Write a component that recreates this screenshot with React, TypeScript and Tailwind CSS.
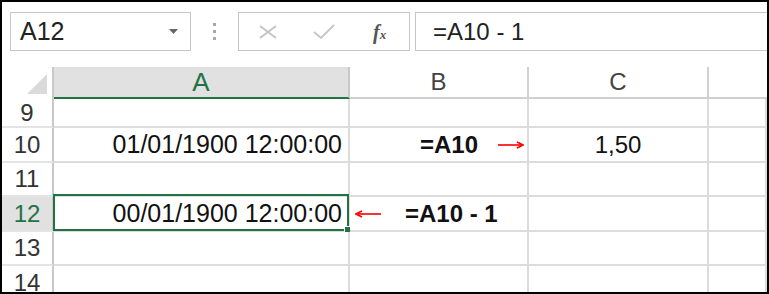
import React from "react";

const green = "#217346";

function ArrowRight() {
  return (
    <svg width="26" height="8" viewBox="0 0 26 8">
      <line x1="0" y1="4" x2="23" y2="4" stroke="#ff0000" strokeWidth="1.6" />
      <path d="M19 1 L25 4 L19 7" fill="none" stroke="#ff0000" strokeWidth="1.6" />
    </svg>
  );
}

function ArrowLeft() {
  return (
    <svg width="26" height="8" viewBox="0 0 26 8">
      <line x1="3" y1="4" x2="26" y2="4" stroke="#ff0000" strokeWidth="1.6" />
      <path d="M7 1 L1 4 L7 7" fill="none" stroke="#ff0000" strokeWidth="1.6" />
    </svg>
  );
}

function RowHead({ n, h, active }: { n: number; h: string; active?: boolean }) {
  return (
    <div
      className={`${h} flex items-center justify-center border-r-2 border-b-2 border-r-[#c8c8c8] border-b-[#e4e4e4] ${
        active ? "bg-[#e1e1e1] text-[#217346]" : "bg-white text-[#333]"
      }`}
    >
      {n}
    </div>
  );
}

function Cell({ h, className = "", children }: { h: string; className?: string; children?: React.ReactNode }) {
  return (
    <div className={`${h} relative flex items-center border-r-2 border-b-2 border-[#dcdcdc] ${className}`}>
      {children}
    </div>
  );
}

export default function App() {
  return (
    <div
      className="w-[769px] h-[294px] border-2 border-black bg-white overflow-hidden text-[24px] leading-none text-[#111]"
      style={{ fontFamily: '"Liberation Sans", Arial, sans-serif' }}
    >
      {/* formula bar */}
      <div className="h-[65px] flex items-start pt-[10px] pl-[8px]">
        <div className="w-[181px] h-[39px] border border-[#c6c6c6] flex items-center pl-[9px] pr-[12px]">
          <span className="flex-1 text-[#222] text-[25px]">A12</span>
          <svg width="9" height="5" viewBox="0 0 9 5">
            <path d="M0 0 L9 0 L4.5 5 Z" fill="#666" />
          </svg>
        </div>
        <div className="w-[47px] h-[39px] flex flex-col items-center justify-center gap-[4px]">
          <span className="w-[3px] h-[3px] bg-[#a8a8a8]" />
          <span className="w-[3px] h-[3px] bg-[#a8a8a8]" />
          <span className="w-[3px] h-[3px] bg-[#a8a8a8]" />
        </div>
        <div className="w-[172px] h-[39px] border border-[#c6c6c6] flex items-center pl-[20px]">
          <svg width="18" height="14" viewBox="0 0 18 14">
            <path d="M1 1 L17 13 M17 1 L1 13" stroke="#c4c4c4" strokeWidth="2" />
          </svg>
          <svg width="22" height="16" viewBox="0 0 22 16" className="ml-[36px]">
            <path d="M1 8 L8 14 L21 1" fill="none" stroke="#c8c8c8" strokeWidth="2" />
          </svg>
          <span
            className="ml-[38px] text-[20px] italic font-bold text-[#555]"
            style={{ fontFamily: '"Liberation Serif", "Times New Roman", serif' }}
          >
            f<span className="text-[13px]">x</span>
          </span>
        </div>
        <div className="flex-1 h-[39px] ml-[5px] -mr-[4px] border border-[#c6c6c6] flex items-center pl-[17px] text-[#222]">
          =A10 - 1
        </div>
      </div>

      {/* grid */}
      <div className="grid grid-cols-[52px_296px_179px_180px_1fr]">
        {/* column headers */}
        <div className="h-[32px] border-r-2 border-[#c8c8c8] flex items-end justify-end pr-[5px] pb-[5px]">
          <svg width="20" height="20" viewBox="0 0 20 20">
            <path d="M20 0 L20 20 L0 20 Z" fill="#dadada" />
          </svg>
        </div>
        <div className="h-[32px] bg-[#e1e1e1] border-b-2 border-[#217346] border-r-2 border-r-[#c8c8c8] flex items-center justify-center text-[#217346] text-[26px]">
          A
        </div>
        <div className="h-[32px] border-b-2 border-r-2 border-[#d0d0d0] flex items-center justify-center text-[#444]">B</div>
        <div className="h-[32px] border-b-2 border-r-2 border-[#d0d0d0] flex items-center justify-center text-[#444]">C</div>
        <div className="h-[32px] border-b-2 border-[#d0d0d0]" />

        {/* row 9 */}
        <RowHead n={9} h="h-[29px]" />
        <Cell h="h-[29px]" />
        <Cell h="h-[29px]" />
        <Cell h="h-[29px]" />
        <Cell h="h-[29px]" className="border-r-0" />

        {/* row 10 */}
        <RowHead n={10} h="h-[35px]" />
        <Cell h="h-[35px]" className="justify-end pr-[6px] text-[25px]">
          01/01/1900 12:00:00
        </Cell>
        <Cell h="h-[35px]" className="pl-[70px] gap-[20px] font-bold">
          <span>=A10</span>
          <ArrowRight />
        </Cell>
        <Cell h="h-[35px]" className="justify-center">
          1,50
        </Cell>
        <Cell h="h-[35px]" className="border-r-0" />

        {/* row 11 */}
        <RowHead n={11} h="h-[34px]" />
        <Cell h="h-[34px]" />
        <Cell h="h-[34px]" />
        <Cell h="h-[34px]" />
        <Cell h="h-[34px]" className="border-r-0" />

        {/* row 12 */}
        <RowHead n={12} h="h-[35px]" active />
        <Cell h="h-[35px]" className="justify-end pr-[6px] text-[25px]">
          00/01/1900 12:00:00
          <div className="absolute -top-[3px] -left-[1px] -right-[1px] -bottom-[1px] border-2" style={{ borderColor: green }} />
          <div className="absolute -right-[3px] -bottom-[3px] w-[7px] h-[7px] bg-[#217346] border border-white" />
        </Cell>
        <Cell h="h-[35px]" className="pl-[5px] gap-[24px] font-bold">
          <ArrowLeft />
          <span>=A10 - 1</span>
        </Cell>
        <Cell h="h-[35px]" />
        <Cell h="h-[35px]" className="border-r-0" />

        {/* row 13 */}
        <RowHead n={13} h="h-[34px]" />
        <Cell h="h-[34px]" />
        <Cell h="h-[34px]" />
        <Cell h="h-[34px]" />
        <Cell h="h-[34px]" className="border-r-0" />

        {/* row 14 */}
        <RowHead n={14} h="h-[35px]" />
        <Cell h="h-[35px]" />
        <Cell h="h-[35px]" />
        <Cell h="h-[35px]" />
        <Cell h="h-[35px]" className="border-r-0" />
      </div>
    </div>
  );
}
